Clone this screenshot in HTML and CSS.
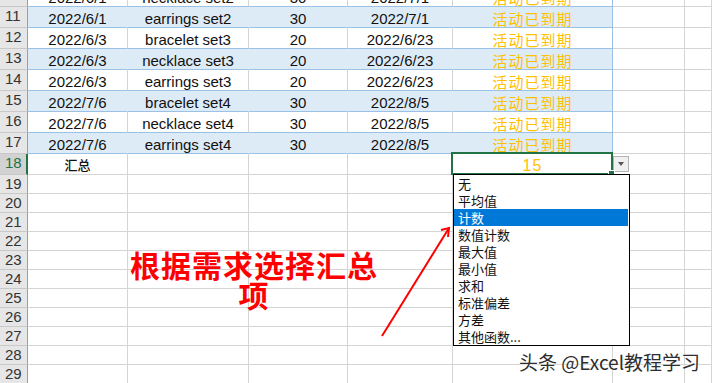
FILE: index.html
```html
<!DOCTYPE html>
<html lang="zh-CN">
<head>
    <meta charset="UTF-8">
    <meta name="viewport" content="width=device-width, initial-scale=1.0">
    <title>汇总项 - 表格</title>
    <link rel="stylesheet" href="styles.css">
</head>
<body>
    <div class="page">
        <div class="sheet">
            <div class="row tall">
                <div class="hd">10</div><div class="c t">2022/6/1</div><div class="c t">necklace set2</div><div class="c t">30</div><div class="c t">2022/7/1</div><div class="c t e st">活动已到期</div><div class="c"></div><div class="c"></div>
            </div>
            <div class="row tall blue">
                <div class="hd">11</div><div class="c t">2022/6/1</div><div class="c t">earrings set2</div><div class="c t">30</div><div class="c t">2022/7/1</div><div class="c t e st">活动已到期</div><div class="c"></div><div class="c"></div>
            </div>
            <div class="row tall">
                <div class="hd">12</div><div class="c t">2022/6/3</div><div class="c t">bracelet set3</div><div class="c t">20</div><div class="c t">2022/6/23</div><div class="c t e st">活动已到期</div><div class="c"></div><div class="c"></div>
            </div>
            <div class="row tall blue">
                <div class="hd">13</div><div class="c t">2022/6/3</div><div class="c t">necklace set3</div><div class="c t">20</div><div class="c t">2022/6/23</div><div class="c t e st">活动已到期</div><div class="c"></div><div class="c"></div>
            </div>
            <div class="row tall">
                <div class="hd">14</div><div class="c t">2022/6/3</div><div class="c t">earrings set3</div><div class="c t">20</div><div class="c t">2022/6/23</div><div class="c t e st">活动已到期</div><div class="c"></div><div class="c"></div>
            </div>
            <div class="row tall blue">
                <div class="hd">15</div><div class="c t">2022/7/6</div><div class="c t">bracelet set4</div><div class="c t">30</div><div class="c t">2022/8/5</div><div class="c t e st">活动已到期</div><div class="c"></div><div class="c"></div>
            </div>
            <div class="row tall">
                <div class="hd">16</div><div class="c t">2022/7/6</div><div class="c t">necklace set4</div><div class="c t">30</div><div class="c t">2022/8/5</div><div class="c t e st">活动已到期</div><div class="c"></div><div class="c"></div>
            </div>
            <div class="row tall blue">
                <div class="hd">17</div><div class="c t">2022/7/6</div><div class="c t">earrings set4</div><div class="c t">30</div><div class="c t">2022/8/5</div><div class="c t e st">活动已到期</div><div class="c"></div><div class="c"></div>
            </div>
            <div class="row tall sel">
                <div class="hd">18</div><div class="c cn">汇总</div><div class="c"></div><div class="c"></div><div class="c"></div>
                <div class="c active st">15
                    <span class="dd-btn"></span>
                    <span class="handle"></span>
                    <ul class="dd-list">
                        <li>无</li>
                        <li>平均值</li>
                        <li class="on">计数</li>
                        <li>数值计数</li>
                        <li>最大值</li>
                        <li>最小值</li>
                        <li>求和</li>
                        <li>标准偏差</li>
                        <li>方差</li>
                        <li>其他函数...</li>
                    </ul>
                </div>
                <div class="c"></div><div class="c"></div>
            </div>
            <div class="row"><div class="hd">19</div><div class="c"></div><div class="c"></div><div class="c"></div><div class="c"></div><div class="c"></div><div class="c"></div><div class="c"></div></div>
            <div class="row"><div class="hd">20</div><div class="c"></div><div class="c"></div><div class="c"></div><div class="c"></div><div class="c"></div><div class="c"></div><div class="c"></div></div>
            <div class="row"><div class="hd">21</div><div class="c"></div><div class="c"></div><div class="c"></div><div class="c"></div><div class="c"></div><div class="c"></div><div class="c"></div></div>
            <div class="row"><div class="hd">22</div><div class="c"></div><div class="c"></div><div class="c"></div><div class="c"></div><div class="c"></div><div class="c"></div><div class="c"></div></div>
            <div class="row"><div class="hd">23</div><div class="c"></div><div class="c"></div><div class="c"></div><div class="c"></div><div class="c"></div><div class="c"></div><div class="c"></div></div>
            <div class="row"><div class="hd">24</div><div class="c"></div><div class="c"></div><div class="c"></div><div class="c"></div><div class="c"></div><div class="c"></div><div class="c"></div></div>
            <div class="row"><div class="hd">25</div><div class="c"></div><div class="c"></div><div class="c"></div><div class="c"></div><div class="c"></div><div class="c"></div><div class="c"></div></div>
            <div class="row"><div class="hd">26</div><div class="c"></div><div class="c"></div><div class="c"></div><div class="c"></div><div class="c"></div><div class="c"></div><div class="c"></div></div>
            <div class="row"><div class="hd">27</div><div class="c"></div><div class="c"></div><div class="c"></div><div class="c"></div><div class="c"></div><div class="c"></div><div class="c"></div></div>
            <div class="row"><div class="hd">28</div><div class="c"></div><div class="c"></div><div class="c"></div><div class="c"></div><div class="c"></div><div class="c"></div><div class="c"></div></div>
            <div class="row"><div class="hd">29</div><div class="c"></div><div class="c"></div><div class="c"></div><div class="c"></div><div class="c"></div><div class="c"></div><div class="c"></div></div>
        </div>

        <div class="note">根据需求选择汇总<br>项</div>

        <svg class="arrow" width="90" height="130" viewBox="0 0 90 130">
            <path d="M12 121 L79 13" stroke="#ff0000" stroke-width="2" fill="none"/>
            <path d="M71 15 L79 13 L78 22" stroke="#ff0000" stroke-width="2" fill="none"/>
        </svg>

        <div class="mark">头条 @Excel教程学习</div>
    </div>
</body>
</html>
```

FILE: styles.css
```css
body {
    margin: 0;
    background: #fff;
    font-family: 'Liberation Sans', 'Noto Sans CJK SC', sans-serif;
}
.page {
    position: relative;
    width: 712px;
    height: 383px;
    overflow: hidden;
}
.sheet {
    margin-top: -14px;
}
.row {
    display: grid;
    grid-template-columns: 28px 100px 121px 99px 105px 160px 72px 1fr;
    height: 19px;
}
.row.tall {
    height: 21px;
}
.hd, .c {
    box-sizing: border-box;
    border-right: 1px solid #d4d4d4;
    border-bottom: 1px solid #d4d4d4;
}
.hd {
    background: #e6e6e6;
    border-right-color: #9e9e9e;
    border-bottom-color: #c9c9c9;
    color: #333;
    font-size: 15px;
    line-height: 18px;
    padding-left: 5px;
}
.sel .hd {
    background: #d2d2d2;
    color: #217346;
    border-right: 2px solid #217346;
}
.c {
    display: flex;
    align-items: flex-end;
    justify-content: center;
    font-size: 15px;
    line-height: 17px;
    color: #111;
    white-space: nowrap;
}
.c.t {
    border-bottom-color: #9bc2e6;
}
.c.e {
    border-right-color: #9bc2e6;
}
.blue .c.t {
    background: #ddebf7;
    border-right-color: #ddebf7;
}
.blue .c.e {
    border-right-color: #9bc2e6;
}
.st {
    color: #ffc000;
    font-family: 'Noto Sans CJK SC', sans-serif;
    letter-spacing: 1px;
}
.active {
    position: relative;
    font-family: 'Liberation Sans', sans-serif;
    font-size: 16px;
}
.cn {
    font-family: 'Noto Sans CJK SC', sans-serif;
    font-size: 13px;
    font-weight: 500;
    line-height: 19px;
    align-items: center;
}
.active::after {
    content: '';
    position: absolute;
    left: -2px;
    top: -2px;
    right: -1px;
    bottom: -1px;
    border: 2px solid #217346;
}
.handle {
    position: absolute;
    right: -3px;
    bottom: -3px;
    width: 5px;
    height: 5px;
    background: #217346;
    border: 1px solid #fff;
    z-index: 2;
}
.dd-btn {
    position: absolute;
    left: 160px;
    top: 2px;
    width: 16px;
    height: 16px;
    box-sizing: border-box;
    background: #f0f0f0;
    border: 1px solid #b4b4b4;
}
.dd-btn::after {
    content: '';
    position: absolute;
    left: 4px;
    top: 5px;
    border-left: 3.5px solid transparent;
    border-right: 3.5px solid transparent;
    border-top: 4px solid #555;
}
.dd-list {
    position: absolute;
    left: 0;
    top: 20px;
    width: 177px;
    margin: 0;
    padding: 0;
    list-style: none;
    background: #fff;
    border: 1px solid #000;
    box-sizing: border-box;
    z-index: 3;
    letter-spacing: 0;
}
.dd-list li {
    height: 17px;
    line-height: 17px;
    padding-left: 4px;
    margin-right: 1px;
    font-family: 'Noto Sans CJK SC', sans-serif;
    font-size: 13px;
    color: #111;
}
.dd-list li.on {
    background: #0078d7;
    color: #fff;
}
.note {
    position: absolute;
    left: 129px;
    top: 249px;
    width: 250px;
    text-align: center;
    font-family: 'Noto Sans CJK SC', sans-serif;
    font-weight: bold;
    font-size: 30px;
    line-height: 30px;
    letter-spacing: 1px;
    color: #ff0000;
}
.arrow {
    position: absolute;
    left: 370px;
    top: 215px;
}
.mark {
    position: absolute;
    left: 519px;
    top: 350px;
    font-family: 'Noto Sans CJK SC', sans-serif;
    font-size: 19px;
    line-height: 24px;
    color: #2e2e2e;
    text-shadow: 0 0 2px #fff, 0 0 2px #fff;
}
```
